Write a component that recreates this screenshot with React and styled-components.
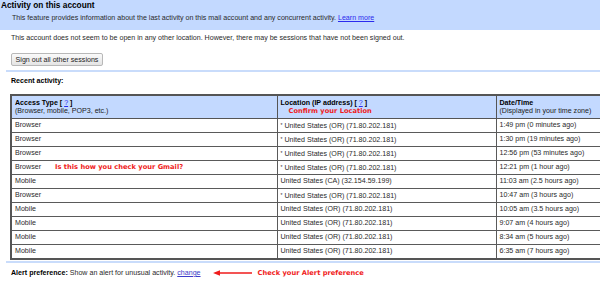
import React from 'react';
import styled, { createGlobalStyle } from 'styled-components';

const GlobalStyle = createGlobalStyle`
  html, body {
    margin: 0;
    padding: 0;
    overflow: hidden;
    background: #fff;
  }
  body {
    font-family: "Liberation Sans", Arial, sans-serif;
    font-size: 7.1px;
    color: #2a2a2a;
  }
`;

const rows = [
  { type: 'Browser', star: true, loc: 'United States (OR) (71.80.202.181)', time: '1:49 pm (0 minutes ago)' },
  { type: 'Browser', star: true, loc: 'United States (OR) (71.80.202.181)', time: '1:30 pm (19 minutes ago)' },
  { type: 'Browser', star: true, loc: 'United States (OR) (71.80.202.181)', time: '12:56 pm (53 minutes ago)' },
  { type: 'Browser', star: true, loc: 'United States (OR) (71.80.202.181)', time: '12:21 pm (1 hour ago)', note: 'Is this how you check your Gmail?' },
  { type: 'Mobile', loc: 'United States (CA) (32.154.59.199)', time: '11:03 am (2.5 hours ago)' },
  { type: 'Browser', star: true, loc: 'United States (OR) (71.80.202.181)', time: '10:47 am (3 hours ago)' },
  { type: 'Mobile', loc: 'United States (OR) (71.80.202.181)', time: '10:05 am (3.5 hours ago)' },
  { type: 'Mobile', loc: 'United States (OR) (71.80.202.181)', time: '9:07 am (4 hours ago)' },
  { type: 'Mobile', loc: 'United States (OR) (71.80.202.181)', time: '8:34 am (5 hours ago)' },
  { type: 'Mobile', loc: 'United States (OR) (71.80.202.181)', time: '6:35 am (7 hours ago)' },
];

const App = () => {
  return (
    <Page>
      <GlobalStyle />
      <Banner>
        <Title>Activity on this account</Title>
        <Intro>
          This feature provides information about the last activity on this mail account and any concurrent activity.{' '}
          <Link href="#">Learn more</Link>
        </Intro>
      </Banner>

      <Body>
        <Line>This account does not seem to be open in any other location. However, there may be sessions that have not been signed out.</Line>
        <Button>Sign out all other sessions</Button>
      </Body>

      <Rule />

      <Body>
        <Label>Recent activity:</Label>
      </Body>

      <Activity>
        <colgroup>
          <col style={{ width: 266 }} />
          <col style={{ width: 219 }} />
          <col style={{ width: 125 }} />
        </colgroup>
        <thead>
          <tr>
            <Th>
              <b>Access Type [ <Link href="#">?</Link> ]</b>
              <br />
              (Browser, mobile, POP3, etc.)
            </Th>
            <Th>
              <b>Location (IP address) [ <Link href="#">?</Link> ]</b>
              <br />
              <Note $indent={8}>Confirm your Location</Note>
            </Th>
            <Th>
              <b>Date/Time</b>
              <br />
              (Displayed in your time zone)
            </Th>
          </tr>
        </thead>
        <tbody>
          {rows.map((r, i) => (
            <tr key={i}>
              <Td>
                {r.type}
                {r.note && <Note $indent={14}>{r.note}</Note>}
              </Td>
              <Td>{r.star && <Star>*</Star>}{r.loc}</Td>
              <Td>{r.time}</Td>
            </tr>
          ))}
        </tbody>
      </Activity>

      <AlertBar>
        <b>Alert preference:</b>&nbsp;Show an alert for unusual activity.&nbsp;
        <ChangeLink href="#">change</ChangeLink>
        <Arrow width="39" height="6" viewBox="0 0 39 6">
          <path d="M0 3 L7 0.2 L7 2.2 L39 2.2 L39 3.8 L7 3.8 L7 5.8 Z" fill="#f01c1c" />
        </Arrow>
        <Note $indent={6}>Check your Alert preference</Note>
      </AlertBar>
    </Page>
  );
};

const Page = styled.div`
  width: 600px;
  height: 283px;
  overflow: hidden;
`;

const Banner = styled.div`
  background: #c3d9ff;
  height: 30px;
`;

const Title = styled.div`
  font-weight: bold;
  font-size: 8.3px;
  line-height: 10px;
  color: #000;
  padding-left: 1px;
`;

const Intro = styled.div`
  margin-top: 4px;
  padding-left: 12px;
  line-height: 8px;
`;

const Link = styled.a`
  color: #2a2aee;
  text-decoration: underline;
  font-weight: normal;
`;

const ChangeLink = styled(Link)`
  color: #3b3bc9;
`;

const Body = styled.div`
  padding-left: 11px;
`;

const Line = styled.div`
  margin-top: 4px;
  line-height: 8px;
`;

const Button = styled.button`
  display: block;
  margin-top: 11px;
  height: 13px;
  width: 92px;
  padding: 0;
  font-family: inherit;
  font-size: 7.1px;
  color: #222;
  background: linear-gradient(#fafafa, #e4e4e4);
  border: 1px solid #b8b8b8;
  border-radius: 2px;
`;

const Rule = styled.div`
  margin: 4px 0 0 6px;
  height: 2px;
  background: #c9dcfb;
`;

const Label = styled.div`
  margin-top: 5px;
  font-weight: bold;
  line-height: 8px;
  color: #000;
`;

const Activity = styled.table`
  margin: 9px 0 0 10px;
  width: 610px;
  table-layout: fixed;
  border-collapse: collapse;
  border: 2px solid #555;
  font-size: 7.1px;
`;

const Th = styled.th`
  background: #c3d9ff;
  text-align: left;
  font-weight: normal;
  vertical-align: top;
  padding: 3px 3px 2px;
  height: 15px;
  line-height: 8.4px;
  border: 1px solid #555;
  color: #222;
  b {
    color: #000;
  }
`;

const Td = styled.td`
  padding: 0 3px;
  height: 13px;
  line-height: 8px;
  border: 1px solid #5a5a5a;
  white-space: nowrap;
`;

const Star = styled.span`
  font-size: 5px;
  vertical-align: 1px;
  margin-right: 2px;
`;

const Note = styled.span`
  margin-left: ${p => p.$indent}px;
  font-family: "DejaVu Sans", Verdana, sans-serif;
  font-weight: bold;
  font-size: 6.7px;
  color: #f01c1c;
`;

const AlertBar = styled.div`
  margin: 1px 0 0 6px;
  height: 20px;
  border-top: 2px solid #c9dcfb;
  border-bottom: 2px solid #c9dcfb;
  padding-left: 5px;
  display: flex;
  align-items: center;
  b {
    color: #000;
  }
`;

const Arrow = styled.svg`
  margin-left: 12px;
  display: block;
`;

export default App;
